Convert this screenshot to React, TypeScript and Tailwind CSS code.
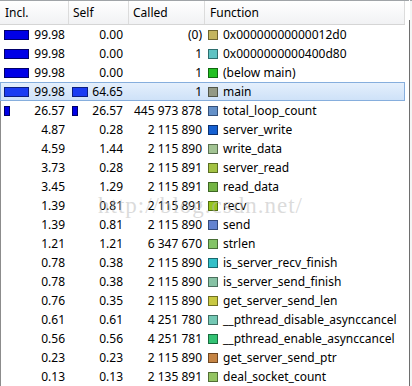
import React from "react";

type Row = {
  incl: string;
  self: string;
  called: string;
  fn: string;
  color: string;
  border: string;
  inclBar?: number;
  selfBar?: number;
};

const rows: Row[] = [
  { incl: "99.98", self: "0.00", called: "(0)", fn: "0x00000000000012d0", color: "#c4b55e", border: "#6e6530", inclBar: 25 },
  { incl: "99.98", self: "0.00", called: "1", fn: "0x0000000000400d80", color: "#5ec3c3", border: "#2d6e6e", inclBar: 25 },
  { incl: "99.98", self: "0.00", called: "1", fn: "(below main)", color: "#22c022", border: "#0f6a0f", inclBar: 25 },
  { incl: "99.98", self: "64.65", called: "1", fn: "main", color: "#939985", border: "#525648", inclBar: 25, selfBar: 16 },
  { incl: "26.57", self: "26.57", called: "445 973 878", fn: "total_loop_count", color: "#6490c8", border: "#34507a", inclBar: 6, selfBar: 6 },
  { incl: "4.87", self: "0.28", called: "2 115 890", fn: "server_write", color: "#1560d0", border: "#0a3070" },
  { incl: "4.59", self: "1.44", called: "2 115 890", fn: "write_data", color: "#a2c393", border: "#5a7050" },
  { incl: "3.73", self: "0.28", called: "2 115 891", fn: "server_read", color: "#a3c243", border: "#5a6e22" },
  { incl: "3.45", self: "1.29", called: "2 115 891", fn: "read_data", color: "#74b444", border: "#3e6624" },
  { incl: "1.39", self: "0.81", called: "2 115 891", fn: "recv", color: "#96c41e", border: "#52700e" },
  { incl: "1.39", self: "0.81", called: "2 115 890", fn: "send", color: "#6383d0", border: "#334a7a" },
  { incl: "1.21", self: "1.21", called: "6 347 670", fn: "strlen", color: "#84c466", border: "#486e36" },
  { incl: "0.78", self: "0.38", called: "2 115 890", fn: "is_server_recv_finish", color: "#33c0c8", border: "#186a70" },
  { incl: "0.78", self: "0.38", called: "2 115 890", fn: "is_server_send_finish", color: "#86c2a4", border: "#4a6e5c" },
  { incl: "0.76", self: "0.35", called: "2 115 890", fn: "get_server_send_len", color: "#c8c842", border: "#707022" },
  { incl: "0.61", self: "0.61", called: "4 251 780", fn: "__pthread_disable_asynccancel", color: "#74c8b4", border: "#407064" },
  { incl: "0.56", self: "0.56", called: "4 251 781", fn: "__pthread_enable_asynccancel", color: "#33c274", border: "#186c3e" },
  { incl: "0.23", self: "0.23", called: "2 115 890", fn: "get_server_send_ptr", color: "#c58444", border: "#6e4622" },
  { incl: "0.13", self: "0.13", called: "2 135 891", fn: "deal_socket_count", color: "#94c462", border: "#526e34" },
];

function Bar({ w, sel, left }: { w?: number; sel?: boolean; left: string }) {
  if (!w) return null;
  return (
    <span
      className={
        "absolute top-[5px] h-[10px] border " +
        left +
        " " +
        (sel ? "bg-[#1a3cf2] border-[#0c1e80]" : "bg-[#0000e6] border-[#00006a]")
      }
      style={{ width: w }}
    />
  );
}

export default function App() {
  return (
    <div
      className="relative w-[412px] h-[386px] overflow-hidden bg-white text-[12px] text-black"
      style={{ fontFamily: '"Noto Sans", "Liberation Sans", sans-serif' }}
    >
      <div className="flex">
        <div className="w-[405px]">
          {/* header */}
          <div className="flex h-[25px] border-t border-t-[#a0a4a8] border-b border-b-[#d5d5d5] bg-gradient-to-b from-white to-[#f1f2f4]">
            <div className="w-[69px] border-r border-[#dcdcdc] pl-[5px] leading-[23px]">Incl.</div>
            <div className="w-[60px] border-r border-[#dcdcdc] pl-[4px] leading-[23px]">Self</div>
            <div className="w-[76px] border-r border-[#dcdcdc] pl-[4px] leading-[23px]">Called</div>
            <div className="flex-1 border-r border-[#dcdcdc] pl-[5px] leading-[23px]">Function</div>
          </div>
          {/* rows */}
          {rows.map((r, i) => {
            const sel = i === 3;
            return (
              <div
                key={i}
                className={
                  "flex h-[19px] leading-[19px] " +
                  (sel
                    ? "bg-gradient-to-b from-[#e6f0fc] to-[#cde1f8] outline outline-1 -outline-offset-1 outline-[#86aedd]"
                    : i > 3
                    ? "border-l border-[#8c8c8c]"
                    : "")
                }
              >
                <div className={"relative text-right pr-[1px] " + (i > 3 ? "w-[65px]" : "w-[66px]")}>
                  <Bar w={r.inclBar} sel={sel} left={i > 3 ? "left-[3px]" : "left-[4px]"} />
                  {r.incl}
                </div>
                <div className="relative w-[60px] text-right pr-[3px]">
                  <Bar w={r.selfBar} sel={sel} left="left-[6px]" />
                  {r.self}
                </div>
                <div className="w-[77px] text-right pr-[1px]">{r.called}</div>
                <div className="flex flex-1 items-center pl-[5px] whitespace-nowrap">
                  <span
                    className="mr-[5px] h-[10px] w-[10px] shrink-0 border"
                    style={{ backgroundColor: r.color, borderColor: r.border }}
                  />
                  <span>{r.fn}</span>
                </div>
              </div>
            );
          })}
        </div>
        <div className="w-[7px] flex">
          <div className="w-[4px] h-[386px] border-t border-[#a0a4a8] bg-white" />
          <div className="mt-[20px] w-[1px] h-[366px] bg-[#6e6e6e]" />
          <div className="w-[2px] h-[386px] border-t border-[#a0a4a8] bg-[#f4f4f4]" />
        </div>
      </div>
      {/* watermark */}
      <div
        className="pointer-events-none absolute left-[98px] top-[189px] text-[23px] tracking-[1px] text-[#b8b8b8]/50"
        style={{ fontFamily: '"Liberation Serif", serif' }}
      >
        http://blog.csdn.net/
      </div>
    </div>
  );
}
